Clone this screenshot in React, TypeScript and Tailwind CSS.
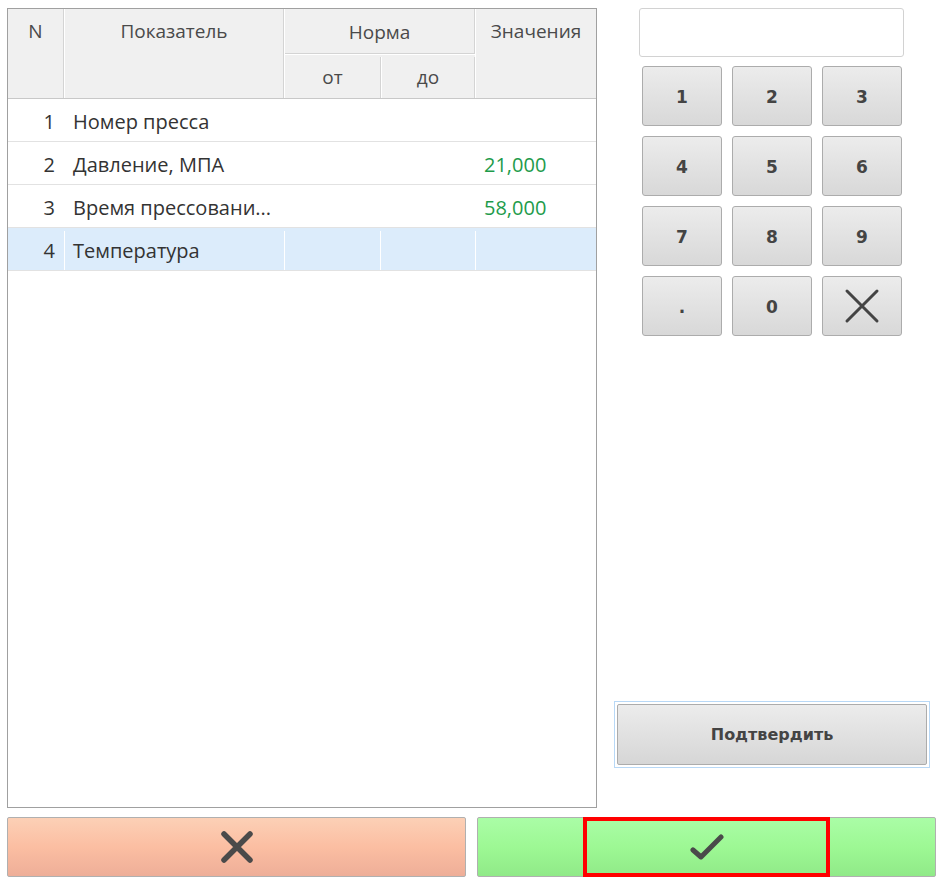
import React from "react"

const rows = [
  { n: 1, name: "Номер пресса", from: "", to: "", value: "" },
  { n: 2, name: "Давление, МПА", from: "", to: "", value: "21,000" },
  { n: 3, name: "Время прессовани...", from: "", to: "", value: "58,000" },
  { n: 4, name: "Температура", from: "", to: "", value: "", selected: true },
]

const keys = ["1", "2", "3", "4", "5", "6", "7", "8", "9", ".", "0", "x"]

function KeyButton({ label }: { label: string }) {
  return (
    <button className="flex h-[60px] w-[80px] items-center justify-center rounded-[3px] border border-[#acacac] bg-gradient-to-b from-[#ececec] to-[#d8d8d8] pt-[3px] text-[17px] font-bold text-[#444]">
      {label === "x" ? (
        <svg width="36" height="36" viewBox="0 0 36 36" className="-mt-[3px]">
          <path d="M3 3 L33 33 M33 3 L3 33" stroke="#444" strokeWidth="3" strokeLinecap="round" />
        </svg>
      ) : (
        label
      )}
    </button>
  )
}

export default function App() {
  return (
    <div
      className="flex h-[890px] w-[948px] flex-col bg-white pl-[7px] pr-[12px] pt-[8px]"
      style={{ fontFamily: '"Open Sans", "Noto Sans", sans-serif' }}
    >
      <div className="flex h-[800px]">
        {/* Table */}
        <div className="flex h-[800px] w-[590px] flex-col border border-[#a0a0a0] bg-white">
          {/* Header */}
          <div className="flex h-[90px] border-b border-[#c8c8c8] bg-[#f0f0f0] text-[19px] text-[#4a4a4a]">
            <div className="flex w-[56px] justify-center border-r border-[#d4d4d4] pt-[8px]">N</div>
            <div className="flex w-[220px] justify-center border-l border-r border-l-white border-r-[#d4d4d4] pt-[8px]">
              Показатель
            </div>
            <div className="flex w-[191px] flex-col border-l border-white">
              <div className="flex h-[45px] items-center justify-center border-b border-r border-b-[#d4d4d4] border-r-[#d4d4d4] pt-[2px]">
                Норма
              </div>
              <div className="flex flex-1 border-t border-white pt-[2px]">
                <div className="flex w-[96px] items-center justify-center border-r border-[#d4d4d4]">от</div>
                <div className="flex flex-1 items-center justify-center border-l border-r border-l-white border-r-[#d4d4d4]">
                  до
                </div>
              </div>
            </div>
            <div className="flex flex-1 justify-center border-l border-white pt-[8px]">Значения</div>
          </div>
          {/* Body */}
          {rows.map(r => (
            <div
              key={r.n}
              className={`flex h-[43px] border-b border-[#e2e2e2] pt-[3px] text-[20px] text-[#333] ${
                r.selected ? "bg-[#dcecfb]" : "bg-white"
              }`}
            >
              <div className="flex w-[57px] items-center justify-end border-r border-white pr-[9px]">{r.n}</div>
              <div className="flex w-[220px] items-center overflow-hidden whitespace-nowrap border-r border-white pl-[8px]">
                {r.name}
              </div>
              <div className="flex w-[96px] items-center border-r border-white">{r.from}</div>
              <div className="flex w-[95px] items-center border-r border-white">{r.to}</div>
              <div className="flex flex-1 items-center pl-[8px] text-[#1e9b4b]">{r.value}</div>
            </div>
          ))}
        </div>

        {/* Right panel */}
        <div className="flex flex-1 flex-col" style={{ fontFamily: '"DejaVu Sans", sans-serif' }}>
          <div className="flex flex-col pl-[42px]">
            <div className="h-[49px] w-[265px] rounded-[3px] border border-[#d2d2d2] bg-white" />
            <div className="mt-[9px] grid w-[263px] grid-cols-3 gap-x-[10px] gap-y-[10px] pl-[3px]">
              {keys.map(k => (
                <KeyButton key={k} label={k} />
              ))}
            </div>
          </div>
          <div className="mt-auto mb-[40px] ml-[17px] w-[316px] border border-[#b8d8f6] p-[2px]">
            <button className="flex h-[61px] w-full items-center justify-center rounded-[2px] border border-[#acacac] bg-gradient-to-b from-[#ececec] to-[#d6d6d6] text-[16px] font-bold text-[#444]">
              Подтвердить
            </button>
          </div>
        </div>
      </div>

      {/* Bottom buttons */}
      <div className="mt-[9px] flex h-[60px] gap-[11px]">
        <button className="flex h-[60px] w-[460px] items-center justify-center rounded-[2px] border border-[#b0b0b0] bg-gradient-to-b from-[#fcd0b6] via-[#fbbea2] to-[#eeae98]">
          <svg width="34" height="34" viewBox="0 0 34 34">
            <path d="M4 4 L30 30 M30 4 L4 30" stroke="#4a4a4a" strokeWidth="5.5" strokeLinecap="round" />
          </svg>
        </button>
        <button className="relative flex h-[60px] w-[460px] items-center justify-center rounded-[2px] border border-[#b0b0b0] bg-gradient-to-b from-[#aafda6] via-[#9df894] to-[#90ea88]">
          <svg width="34" height="30" viewBox="0 0 34 30">
            <path d="M3 18 L11 25 L31 5" fill="none" stroke="#4a4a4a" strokeWidth="5" strokeLinecap="round" strokeLinejoin="round" />
          </svg>
          <span className="absolute bottom-[-1px] left-[105px] top-[-1px] w-[247px] border-[4px] border-[#ff0000]" />
        </button>
      </div>
    </div>
  )
}
